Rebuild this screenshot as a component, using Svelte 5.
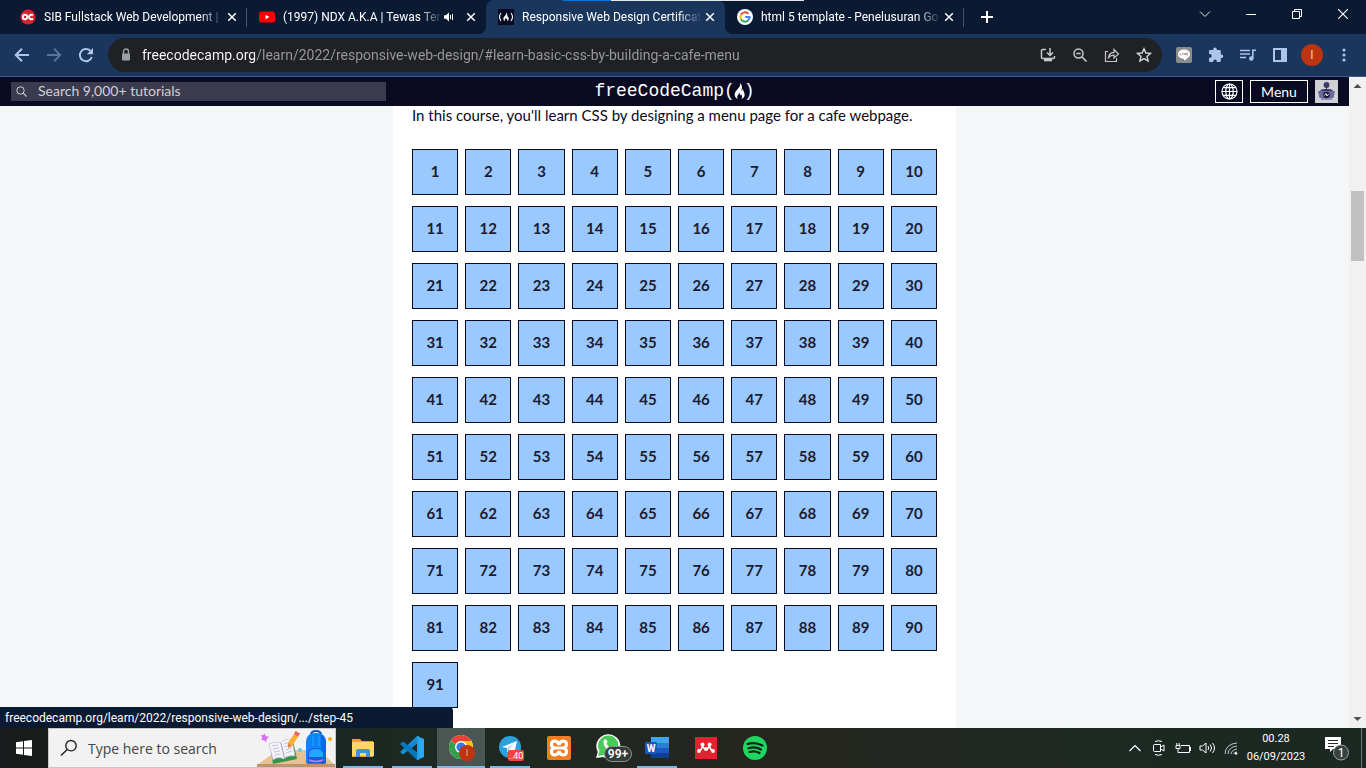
<script>
  const steps = Array.from({ length: 91 }, (_, i) => i + 1);
  const tabs = [
    { icon: 'oc', title: 'SIB Fullstack Web Development |' },
    { icon: 'yt', title: '(1997) NDX A.K.A | Tewas Ter', audio: true },
    { icon: 'fcc', title: 'Responsive Web Design Certificat', active: true },
    { icon: 'google', title: 'html 5 template - Penelusuran Go' }
  ];
  const apps = [
    { id: 'explorer', open: true },
    { id: 'vscode', open: true },
    { id: 'chrome', open: true, active: true },
    { id: 'telegram', open: true },
    { id: 'xampp' },
    { id: 'whatsapp' },
    { id: 'word', open: true },
    { id: 'mendeley' },
    { id: 'spotify' }
  ];
  let address = $state('freecodecamp.org/learn/2022/responsive-web-design/#learn-basic-css-by-building-a-cafe-menu');
</script>

{#snippet flame()}
  <path d="M6.4 0C7.2 2.4 6 3.7 4.3 5.7 2.7 7.500 1.300 9 1.500 11.300 1.700 13.300 2.900 14.500 4.500 15 3.500 13.700 3.700 12.400 4.600 11.300 5.100 10.700 5.500 10.200 5.400 9.200 6.400 9.800 6.700 10.800 6.500 11.700 7.200 11.500 7.400 10.900 7.300 10.300 8.800 12 8.700 13.700 7.600 15 9.800 14.200 11 12.500 10.800 10.500 10.600 8.400 9.300 7.600 9.300 5.600 8.600 6 8.300 6.700 8.400 7.600 7.900 7.500 7.800 6.900 8.100 5.900 8.700 3.400 8.200 1.300 6.400 0Z" fill="#fff" />
{/snippet}

<div class="screen">
  <div class="strip">
    <div class="tabs">
      {#each tabs as tab}
        <div class="tab" class:active={tab.active}>
          <button class="tab-main">
            {#if tab.icon === 'oc'}
              <svg width="16" height="16" viewBox="0 0 16 16"><circle cx="8" cy="8" r="7.600" fill="#d9202e" /><circle cx="5" cy="8" r="2.200" fill="none" stroke="#fff" stroke-width="1.900" /><path d="M12.900 6.500a2.200 2.200 0 1 0 0 3" fill="none" stroke="#fff" stroke-width="1.900" /></svg>
            {:else if tab.icon === 'yt'}
              <svg width="16" height="16" viewBox="0 0 16 16"><rect y="2.500" width="16" height="11" rx="2.500" fill="#f00" /><path d="M6.500 5.700v4.600L10.400 8z" fill="#fff" /></svg>
            {:else if tab.icon === 'fcc'}
              <svg width="16" height="16" viewBox="0 0 16 16"><rect width="16" height="16" fill="#0a0a23" /><path d="M3 4Q0 8 3 12M13 4q3 4 0 8" fill="none" stroke="#fff" stroke-width="1.100" /><g transform="translate(4.500 3.500) scale(.58)">{@render flame()}</g></svg>
            {:else}
              <svg width="16" height="16" viewBox="0 0 16 16"><circle cx="8" cy="8" r="8" fill="#fff" /><g fill="none" stroke-width="2"><path d="M4 5.700A4.600 4.600 0 0 1 11.300 4.700" stroke="#ea4335" /><path d="M4 10.300a4.600 4.600 0 0 1 0-4.600" stroke="#fbbc05" /><path d="M11 11.500A4.600 4.600 0 0 1 4 10.300" stroke="#34a853" /><path d="M8.200 8h4.400a4.600 4.600 0 0 1-1.600 3.500" stroke="#4285f4" /></g></svg>
            {/if}
            <span class="title">{tab.title}</span>
            {#if tab.audio}
              <svg class="audio" width="12" height="12" viewBox="0 0 12 12"><path d="M1 4.200h2L6 1.500v9L3 7.800H1z" fill="#fff" /><path d="M7.500 4v4M9.500 3v6" stroke="#fff" /></svg>
            {/if}
          </button>
          <button class="close" aria-label="Close tab"><svg width="10" height="10" viewBox="0 0 10 10"><path d="M1.200 1.200l7.600 7.600M8.800 1.200L1.200 8.800" stroke="#fff" stroke-width="1.500" /></svg></button>
        </div>
      {/each}
      <button class="new" aria-label="New tab"><svg width="12" height="12" viewBox="0 0 12 12"><path d="M6 0v12M0 6h12" stroke="#fff" stroke-width="2" /></svg></button>
    </div>
    <div class="winctl">
      <button aria-label="Search tabs"><svg width="12" height="8" viewBox="0 0 12 8"><path d="M1 1.500l5 5 5-5" fill="none" stroke="#dfe4ec" /></svg></button>
      <button aria-label="Minimize"><svg width="10" height="10" viewBox="0 0 10 10"><path d="M0 5.500h10" stroke="#fff" /></svg></button>
      <button aria-label="Restore"><svg width="10" height="10" viewBox="0 0 10 10"><path d="M.5 2.500h7v7h-7zM2.500 2.500v-2h7v7h-2" fill="none" stroke="#fff" /></svg></button>
      <button aria-label="Close"><svg width="10" height="10" viewBox="0 0 10 10"><path d="M0 0l10 10M10 0L0 10" stroke="#fff" stroke-width="1.100" /></svg></button>
    </div>
    <div class="topline"></div>
  </div>

  <div class="toolbar">
    <div class="nav">
      <button aria-label="Back"><svg width="16" height="16" viewBox="0 0 16 16"><path d="M15 8H2M8 1.700L1.700 8 8 14.300" fill="none" stroke="#afc5e8" stroke-width="2" /></svg></button>
      <button aria-label="Forward"><svg width="16" height="16" viewBox="0 0 16 16"><path d="M1 8h13M8 1.700L14.300 8 8 14.300" fill="none" stroke="#597399" stroke-width="1.800" /></svg></button>
      <button aria-label="Reload"><svg width="16" height="16" viewBox="0 0 16 16"><path d="M13.800 10A6.100 6.100 0 1 1 12.300 3.700" fill="none" stroke="#afc5e8" stroke-width="2" /><path d="M15 1v6.200H8.800z" fill="#afc5e8" /></svg></button>
    </div>
    <div class="omni">
      <svg class="lock" width="10" height="14" viewBox="0 0 10 14"><path d="M2.500 6V3.500a2.500 2.500 0 0 1 5 0V6" fill="none" stroke="#9aa0a6" stroke-width="1.400" /><rect x="1" y="5.500" width="8" height="7" rx="1" fill="#9aa0a6" /></svg>
      <input type="text" class="url" aria-label="Address" bind:value={address} />
      <button aria-label="Install"><svg width="16" height="16" viewBox="0 0 16 16"><path d="M6 2.500H2.500a1 1 0 0 0-1 1v7a1 1 0 0 0 1 1h11a1 1 0 0 0 1-1V9M10 1v7M7 5.500l3 3 3-3" fill="none" stroke="#c7c9cc" stroke-width="1.500" /><path d="M4 12h8v2.300H4z" fill="#c7c9cc" /></svg></button>
      <button aria-label="Zoom"><svg width="16" height="16" viewBox="0 0 16 16"><circle cx="6.500" cy="6.500" r="4.500" fill="none" stroke="#c7c9cc" stroke-width="1.500" /><path d="M10 10l4.500 4.500M4.300 6.500h4.400" stroke="#c7c9cc" stroke-width="1.700" /></svg></button>
      <button aria-label="Share"><svg width="16" height="16" viewBox="0 0 16 16"><path d="M4 4.500H1.500v10h11V11M4.500 10.500c.4-3.500 2.300-5 5.500-5.200V2.500L14.500 7 10 11V8.200c-2.500 0-4.200.7-5.500 2.300z" fill="none" stroke="#c7c9cc" stroke-width="1.200" /></svg></button>
      <button aria-label="Bookmark"><svg width="16" height="16" viewBox="0 0 16 16"><path d="M8 1.800l1.900 4.200 4.600.4-3.500 3.100 1.100 4.500L8 11.600 3.900 14 5 9.500 1.500 6.400 6.100 6z" fill="none" stroke="#d5d7da" stroke-width="1.400" /></svg></button>
    </div>
    <div class="exts">
      <button aria-label="LINE"><svg width="16" height="16" viewBox="0 0 16 16"><rect width="16" height="16" rx="2" fill="#8b8b8b" /><path d="M8 2.500c3.500 0 6 2 6 4.700 0 2.500-3 4.500-6 6.600v-2C4.500 11.700 2 9.900 2 7.200s2.500-4.700 6-4.700z" fill="#fff" /><path d="M4 6v2h1.200M6.500 6v2M8 8V6l1.500 2V6M12 6h-1.300v2H12M10.700 7H12" fill="none" stroke="#777" stroke-width=".6" /></svg></button>
      <button aria-label="Extensions"><svg width="16" height="16" viewBox="0 0 16 16"><path d="M13.500 7.500h-.7V4.300A1.300 1.300 0 0 0 11.500 3H8.800v-.6a1.800 1.800 0 0 0-3.600 0V3H2.300A1.300 1.300 0 0 0 1 4.300V7h.8a1.900 1.900 0 0 1 0 3.800H1v3A1.200 1.200 0 0 0 2.300 15h2.900v-.8a1.800 1.800 0 0 1 3.600 0v.8h2.700a1.300 1.300 0 0 0 1.300-1.200v-2.700h.7a1.800 1.800 0 0 0 0-3.600z" fill="#aec4e8" /></svg></button>
      <button aria-label="Media"><svg width="16" height="16" viewBox="0 0 16 16"><path d="M0 3.500h10M0 7h10M0 10.500h6" stroke="#aec4e8" stroke-width="1.500" /><path d="M16 3.200h-3.200v8" fill="none" stroke="#aec4e8" stroke-width="1.600" /><circle cx="11.300" cy="11.500" r="2.200" fill="#aec4e8" /></svg></button>
      <button aria-label="Side panel"><svg width="16" height="16" viewBox="0 0 16 16"><path d="M1 1h14v14H1zM3 3v10h6V3z" fill="#aec4e8" fill-rule="evenodd" /></svg></button>
      <button class="who" aria-label="Profile"><span>I</span></button>
      <button aria-label="More"><svg width="4" height="14" viewBox="0 0 4 14" fill="#aec4e8"><circle cx="2" cy="2" r="1.600" /><circle cx="2" cy="7" r="1.600" /><circle cx="2" cy="12" r="1.600" /></svg></button>
    </div>
  </div>

  <div class="view">
    <div class="page">
      <header>
        <label class="search">
          <svg width="11" height="11" viewBox="0 0 11 11"><circle cx="4.500" cy="4.500" r="3.700" fill="none" stroke="#d0d0d5" stroke-width="1" /><path d="M7.200 7.200l3.300 3.300" stroke="#d0d0d5" stroke-width="1.100" /></svg>
          <input type="text" placeholder="Search 9,000+ tutorials" aria-label="Search 9,000+ tutorials" />
        </label>
        <a class="logo" href="#home"><span>freeCodeCamp(</span><svg width="11" height="16" viewBox="1 0 10 15">{@render flame()}</svg><span>)</span></a>
        <div class="actions">
          <button class="box globe" aria-label="Language"><svg width="17" height="17" viewBox="0 0 17 17"><g fill="none" stroke="#fff" stroke-width="1.200"><circle cx="8.500" cy="8.500" r="7.500" /><ellipse cx="8.500" cy="8.500" rx="3.700" ry="7.500" /><path d="M8.500 1v15M1 8.500h15M2.300 4.700h12.400M2.300 12.300h12.400" /></g></svg></button>
          <button class="box menu">Menu</button>
          <button class="avatar" aria-label="Account"><svg width="23" height="23" viewBox="0 0 23 23"><rect width="23" height="23" fill="#d0d0d5" /><circle cx="11.500" cy="5" r="2.900" fill="#3b3b6b" /><path d="M11 7h1v2h-1z" fill="#3b3b6b" /><path d="M5 11c1-2 4-2 6.500-2s5.500 0 6.500 2z" fill="#3b3b6b" /><path d="M3 11h17l-1.500 7h-14z" fill="#6a6a9d" /><path d="M6 18h11v2H6z" fill="#8f8fb6" /><circle cx="11.500" cy="15" r="3.200" fill="#1b1b32" /><path d="M9.500 15.500l1.500-2 1 2.500 1.700-2" fill="none" stroke="#fff" stroke-width=".9" /></svg></button>
        </div>
      </header>
      <main>
        <section>
          <p>In this course, you'll learn CSS by designing a menu page for a cafe webpage.</p>
          <nav class="steps" aria-label="Steps">
            {#each steps as n}<a href={`#step-${n}`}>{n}</a>{/each}
          </nav>
        </section>
      </main>
    </div>
    <div class="scroll">
      <svg width="17" height="17" viewBox="0 0 17 17"><path d="M4.500 11l4-4 4 4z" fill="#505050" /></svg>
      <div class="thumb"></div>
      <svg width="17" height="17" viewBox="0 0 17 17"><path d="M4.500 6l4 4 4-4z" fill="#505050" /></svg>
    </div>
    <div class="status">freecodecamp.org/learn/2022/responsive-web-design/.../step-45</div>
  </div>

  <footer>
    <button class="start" aria-label="Start"><svg width="16" height="16" viewBox="0 0 16 16"><path d="M0 2.200L7 1.200v6.400H0zM8 1.100L16 0v7.600H8zM0 8.500h7v6.300l-7-1zM8 8.500h8V16l-8-1.100z" fill="#fff" /></svg></button>
    <label class="find">
      <svg width="18" height="18" viewBox="0 0 18 18"><circle cx="11" cy="6.700" r="5.200" fill="none" stroke="#222" stroke-width="1.400" /><path d="M7.200 10.500L1 16.500" stroke="#222" stroke-width="1.500" /></svg>
      <input type="text" placeholder="Type here to search" aria-label="Type here to search" />
      <svg class="art" width="78" height="38" viewBox="0 0 78 38">
        <path d="M0 36L21 21h41l16 15z" fill="#e8c193" /><path d="M0 35h78v3H0z" fill="#be936d" />
        <path d="M7.500 4c.5 3 1.500 3.500 5 4-3 1.500-3.500 2-3 6-2-3-3-3.500-6-2.500 2.500-2.500 2-3 0-5.500 2.500.7 3.500 0 4-2z" fill="#d86df2" />
        <path d="M13 16l23-4 4 18-24 5z" fill="#35944b" /><path d="M12 15q6-3 12-1.500Q28 9 35 11l3 16q-7-1-11 3-6-3-11 1z" fill="#f4f2fb" stroke="#b8b2c7" stroke-width=".6" />
        <path d="M24 14l3.500 15" stroke="#9b96b2" stroke-width=".9" /><path d="M15 17l6-1M16 20l6-1M17 23l6-1M17.500 26l6-1M27 15l6-2M27.500 18l6-2M28.500 21l6-2M29 24l6-2" stroke="#bdb8cd" stroke-width=".8" />
        <path d="M31 14l6-9 4 3-6 9-4 2z" fill="#ffae2e" /><path d="M37 5l1.500-3 4.500 2.500L41 8z" fill="#ef625d" /><path d="M31 14l4 3-4 2z" fill="#d8894a" />
        <circle cx="43" cy="21" r="2" fill="#54cfe3" /><circle cx="73" cy="10" r="2" fill="#f8ad17" />
        <path d="M54 6q0-4 5-4t5 4" fill="none" stroke="#1455b8" stroke-width="2" /><path d="M49 33V13q0-9 10-9t10 9v20q0 2-3 2H52q-3 0-3-2z" fill="#0c83f6" /><path d="M65 6q4 3 4 8v19q0 2-3 2h-2V6z" fill="#0a6ae4" /><path d="M56 7v10M62 7v10" stroke="#1aa0ff" stroke-width="1.300" /><path d="M51 32v-8q1-5 8-5t8 5v8q0 2-3 2H54q-3 0-3-2z" fill="#165cdd" /><path d="M52 24q1-4 7-4t7 4v4H52z" fill="#22a7ff" /><path d="M52 31q7 3 14 0" fill="none" stroke="#c77cff" stroke-width="1.500" />
      </svg>
    </label>
    <div class="apps">
      {#each apps as app}
        <button class="app" class:open={app.open} class:active={app.active} aria-label={app.id}>
          {#if app.id === 'explorer'}
            <svg width="24" height="24" viewBox="0 0 24 24"><path d="M1 3h8l2 2h11v16H1z" fill="#e8a51d" /><path d="M1 6h22v14H1z" fill="#ffd767" /><path d="M5 21v-6q0-2 2-2h10q2 0 2 2v6h-4v-4H9v4z" fill="#3b93d9" /></svg>
          {:else if app.id === 'vscode'}
            <svg width="24" height="24" viewBox="0 0 24 24"><path d="M17 0l7 3v18l-7 3z" fill="#29a9ee" /><path d="M17 0L0 16l3 2.500L18 7z" fill="#168bd0" /><path d="M17 24L0 8l3-2.500L18 17z" fill="#0878be" /><path d="M17 0v24l2 0V0z" fill="#239edf" /></svg>
          {:else if app.id === 'chrome'}
            <svg class="shift" width="26" height="26" viewBox="0 0 26 26"><circle cx="12" cy="12" r="12" fill="#fff" /><path d="M12 12L1.600 6A12 12 0 0 1 22.400 6z" fill="#ea4335" /><path d="M12 12L1.600 6A12 12 0 0 0 12 24l5-9z" fill="#34a04c" /><path d="M12 12V6h10.400A12 12 0 0 1 12 24z" fill="#fbc116" /><circle cx="12" cy="12" r="6" fill="#fff" /><circle cx="12" cy="12" r="4.600" fill="#367be5" /><circle cx="18" cy="18" r="8" fill="#bd3410" /><text x="18" y="21" text-anchor="middle" font-size="9" fill="#f1b5a2">I</text></svg>
          {:else if app.id === 'telegram'}
            <svg class="shift" width="26" height="26" viewBox="0 0 26 26"><circle cx="12" cy="12" r="11" fill="#2aa1da" /><path d="M4 12l15-6-3 13-5-4-2 2v-4z" fill="#fff" /><path d="M9 13l7-5-5 7-2 2z" fill="#b9dcec" /><rect x="10" y="15" width="16" height="11" rx="2" fill="#ee4540" /><text x="18" y="24" text-anchor="middle" font-size="9" fill="#fff">..40</text></svg>
          {:else if app.id === 'xampp'}
            <svg width="24" height="24" viewBox="0 0 24 24"><rect width="24" height="24" rx="2" fill="#f47b20" /><path d="M12 9C11 4 4.500 4 4.500 8.200c0 3 2.500 3.800 4.500 3.800-2 0-4.500.8-4.500 3.800C4.500 20 11 20 12 15c1 5 7.500 5 7.500.8 0-3-2.500-3.800-4.500-3.800 2 0 4.500-.8 4.500-3.800C19.500 4 13 4 12 9zM9 12h6" fill="none" stroke="#fff" stroke-width="3.200" /></svg>
          {:else if app.id === 'whatsapp'}
            <svg class="wide" width="36" height="28" viewBox="0 0 36 28"><path d="M0 24l1.800-6A12 12 0 1 1 7 23z" fill="#fff" /><path d="M2 22l1.500-5A10.200 10.200 0 1 1 8 21z" fill="#4acb59" /><path d="M8 6c2-2 3 0 3.500 2l-1 2q2 3.500 5 4l1.500-1.500 3 1.500q0 3-3.500 3.500C11 17 6 11 8 6z" fill="#fff" /><rect x="8.500" y="12.500" width="27" height="15" rx="7.500" fill="#343b3b" stroke="#8b9090" /><text x="22" y="24" text-anchor="middle" font-size="12" font-weight="600" fill="#fff">99+</text></svg>
          {:else if app.id === 'word'}
            <svg width="24" height="24" viewBox="0 0 24 24"><path d="M6 1h18v6H6z" fill="#41a5ee" /><path d="M6 7h18v5H6z" fill="#2b7cd3" /><path d="M6 12h18v5H6z" fill="#185abd" /><path d="M6 17h18v5H6z" fill="#103f91" /><rect y="6" width="12" height="12" rx="1" fill="#185abd" /><text x="6" y="16" text-anchor="middle" font-size="10" font-weight="700" fill="#fff">W</text></svg>
          {:else if app.id === 'mendeley'}
            <svg width="24" height="24" viewBox="0 0 24 24"><rect x="1" y="1" width="22" height="22" fill="#e6212f" /><g fill="#fff"><circle cx="8.500" cy="8.500" r="2" /><circle cx="15.500" cy="8.500" r="2" /><circle cx="12" cy="13" r="2" /><circle cx="5" cy="15" r="1.900" /><circle cx="19" cy="15" r="1.900" /></g><path d="M5.500 14.500q3-1 2.700-6 1 4.500 3.800 4.500t3.800-4.500q-.3 5 2.700 6" fill="none" stroke="#fff" stroke-width="1.500" /></svg>
          {:else}
            <svg width="24" height="24" viewBox="0 0 24 24"><circle cx="12" cy="12" r="12" fill="#1ed760" /><path d="M4.500 8Q12 5.500 19.500 9.500M5.500 12.300Q12 10 18 13.500M6.500 16Q12 14.500 16.500 17" fill="none" stroke="#132018" stroke-width="2.200" stroke-linecap="round" /></svg>
          {/if}
        </button>
      {/each}
    </div>
    <div class="tray">
      <button aria-label="Hidden icons"><svg width="14" height="14" viewBox="0 0 14 14"><path d="M1.500 10L7 4.500l5.500 5.500" fill="none" stroke="#fff" stroke-width="1.200" /></svg></button>
      <button aria-label="Meet now"><svg width="14" height="16" viewBox="0 0 14 16"><path d="M2.500 4.500h6v7h-6q-1 0-1-1v-5q0-1 1-1zM8.500 7L12 5v6L8.500 9M3 1.500q3.500-1.500 7 0M3 14.500q3.500 1.500 7 0" fill="none" stroke="#fff" /></svg></button>
      <button aria-label="Battery"><svg width="16" height="14" viewBox="0 0 16 14"><path d="M5 11.500h9.500v-7H6M15.500 6v4M1 4.500h4v3H1zM1.800 4.500V2M4.200 4.500V2M3 7.500v4h2" fill="none" stroke="#fff" /></svg></button>
      <button aria-label="Volume"><svg width="17" height="14" viewBox="0 0 17 14"><path d="M1 5h2.500L7 2v10L3.500 9H1zM9 5q1.500 2 0 4M11.200 3.500q2.800 3.500 0 7M13.500 2q4 5 0 10" fill="none" stroke="#fff" /></svg></button>
      <button aria-label="Network"><svg width="14" height="14" viewBox="0 0 14 14"><g fill="none" stroke="#c4c8c6"><path d="M1 13Q1.500 3 13 2M4 13Q4.500 6 13 5M7 13Q7.500 9 13 8M9.500 13Q10 11 13 11" /></g><circle cx="12" cy="12.500" r="1.200" fill="#fff" /></svg></button>
      <button class="clock"><span>00.28</span><span>06/09/2023</span></button>
      <button class="note" aria-label="Notifications"><svg width="26" height="26" viewBox="0 0 26 26"><path d="M1 2h16v12H9l-3 3v-3H1z" fill="#fff" /><path d="M4 5.500h10M4 8.500h10M4 11.500h6" stroke="#26302b" /><circle cx="17" cy="17.500" r="7.500" fill="#3a4240" stroke="#9ca19f" /><text x="17" y="21.500" text-anchor="middle" font-size="12" fill="#fff">1</text></svg></button>
      <button class="desk" aria-label="Show desktop"></button>
    </div>
  </footer>
</div>

<style>
  :global(body) { margin: 0; background: #f5f6f7; }
  button, input { border: 0; padding: 0; margin: 0; background: none; font: inherit; color: inherit; outline: 0; min-width: 0; }
  button { display: flex; align-items: center; justify-content: center; }
  a { text-decoration: none; color: inherit; }
  svg { display: block; flex: none; }
  .screen { height: 100vh; display: flex; flex-direction: column; overflow: hidden; font-family: Roboto, sans-serif; font-size: 12px; color: #fff; }

  .strip { position: relative; flex: none; height: 34px; display: flex; justify-content: space-between; background: #0a1a33; }
  .topline { position: absolute; top: 0; left: 563px; width: 241px; height: 1px; background: linear-gradient(90deg, #0078d7 20%, #e6e6e6 20%); }
  .tabs { display: flex; padding-left: 8px; min-width: 0; }
  .tab { position: relative; display: flex; width: 239px; box-sizing: border-box; padding: 0 7px 0 12px; border-radius: 8px 8px 0 0; }
  .tab:not(.active)::after { content: ""; position: absolute; right: 0; top: 8px; width: 1px; height: 19px; background: #46536a; }
  .tab:nth-child(2)::after { display: none; }
  .tab.active { background: #1b365d; }
  .tab.active::before, .tab.active::after { content: ""; position: absolute; bottom: 0; width: 8px; height: 8px; }
  .tab.active::before { right: 100%; background: radial-gradient(circle at 0 0, #0a1a33 8px, #1b365d 8px); }
  .tab.active::after { left: 100%; background: radial-gradient(circle at 100% 0, #0a1a33 8px, #1b365d 8px); }
  .tab-main { flex: 1; justify-content: flex-start; gap: 8px; }
  .title { flex: 1; overflow: hidden; white-space: nowrap; text-align: left; mask-image: linear-gradient(90deg, #000 calc(100% - 24px), transparent); }
  .audio { margin: 0 8px 0 -8px; }
  .close { width: 16px; }
  .new { width: 46px; }
  .winctl { display: flex; }
  .winctl button { width: 46px; height: 28px; }

  .toolbar { flex: none; height: 43px; box-sizing: border-box; display: flex; align-items: center; gap: 6px; padding: 0 6px; background: #1b365d; border-bottom: 1px solid #3e5d88; }
  .nav, .exts { display: flex; }
  .nav button, .exts button, .omni button { width: 32px; height: 32px; }
  .omni { flex: 1; min-width: 0; height: 34px; display: flex; align-items: center; padding: 0 2px 0 13px; border-radius: 17px; background: #202124; }
  .lock { margin-right: 11px; }
  .url { flex: 1; height: 24px; font-size: 14px; color: transparent; caret-color: #fff; background: linear-gradient(90deg, #fff 113px, #9a9b9d 113px); background-clip: text; -webkit-background-clip: text; }
  .who span { width: 22px; height: 22px; border-radius: 50%; background: #bd3410; color: #f6cabb; line-height: 22px; }

  .view { position: relative; flex: 1; min-height: 0; display: flex; }
  .page { flex: 1; min-width: 0; display: flex; flex-direction: column; font-family: Lato, sans-serif; }
  header { flex: none; height: 29px; display: grid; grid-template-columns: 1fr auto 1fr; align-items: center; padding: 0 11px; background: #0a0a23; }
  .search { width: 375px; max-width: 90%; height: 19px; box-sizing: border-box; display: flex; align-items: center; gap: 11px; padding-left: 5px; background: #3b3b4f; font-size: 14px; }
  .search input { flex: 1; height: 19px; padding-bottom: 2px; box-sizing: border-box; }
  .search input::placeholder { color: #d0d0d5; opacity: 1; }
  .logo { display: flex; align-items: center; font-family: "Liberation Mono", monospace; font-size: 18px; line-height: 20px; padding-bottom: 2px; }
  .logo svg { margin: 0 -1px; }
  .actions { justify-self: end; display: flex; align-items: center; gap: 7px; }
  .box { height: 23px; box-sizing: border-box; border: 1px solid #fff; font-size: 14px; }
  .globe { width: 28px; }
  .menu { width: 58px; }
  main { flex: 1; min-height: 0; overflow: hidden; background: #f5f6f7; color: #1b1b32; }
  section { max-width: 525px; min-height: 100%; margin: 0 auto; padding: 0 19px; background: #fff; }
  p { margin: 0 0 24px; font-size: 15px; line-height: 19px; color: #0a0a23; }
  .steps { display: grid; grid-template-columns: repeat(10, 1fr); gap: 11px 7px; }
  .steps a { height: 46px; box-sizing: border-box; display: flex; align-items: center; justify-content: center; border: 1px solid #0a0a23; background: #99c9ff; font-size: 15px; font-weight: 700; padding-bottom: 2px; }
  .scroll { width: 17px; display: flex; flex-direction: column; background: #f1f1f1; }
  .thumb { flex: none; width: 13px; height: 70px; margin: 97px auto auto; background: #c1c1c1; }
  .status { position: absolute; left: 0; bottom: 0; width: 453px; height: 21px; box-sizing: border-box; padding-left: 5px; line-height: 22px; white-space: nowrap; background: #0a1a33; border-radius: 0 4px 0 0; }

  footer { flex: none; height: 40px; display: flex; background: linear-gradient(90deg, #171b1b, #1c2923 28%, #25261f 58%, #1c2923 85%); }
  .start { width: 48px; }
  .find { width: 288px; box-sizing: border-box; display: flex; align-items: center; padding-left: 11px; border: 1px solid #c8c8c8; background: #f2f2f2; font-family: "Open Sans", sans-serif; font-size: 14px; color: #222; }
  .find input { flex: 1; margin-left: 10px; }
  .find input::placeholder { color: #444; opacity: 1; }
  .apps { flex: 1; display: flex; gap: 1px; padding-left: 3px; }
  .app { position: relative; width: 48px; }
  .app.active { background: #4a5651; }
  .app.open::after { content: ""; position: absolute; left: 4px; right: 4px; bottom: 0; height: 2px; background: #76b9ed; }
  .app.active::after { left: 0; right: 0; }
  .wide { margin-left: 12px; }
  .shift { margin-left: 2px; }
  .tray { display: flex; }
  .tray button { width: 24px; }
  .tray .clock { width: 66px; flex-direction: column; font-size: 11px; line-height: 18px; }
  .tray .note { width: 52px; padding-left: 4px; }
  .tray .desk { width: 5px; border-left: 1px solid #6c7471; }
</style>
